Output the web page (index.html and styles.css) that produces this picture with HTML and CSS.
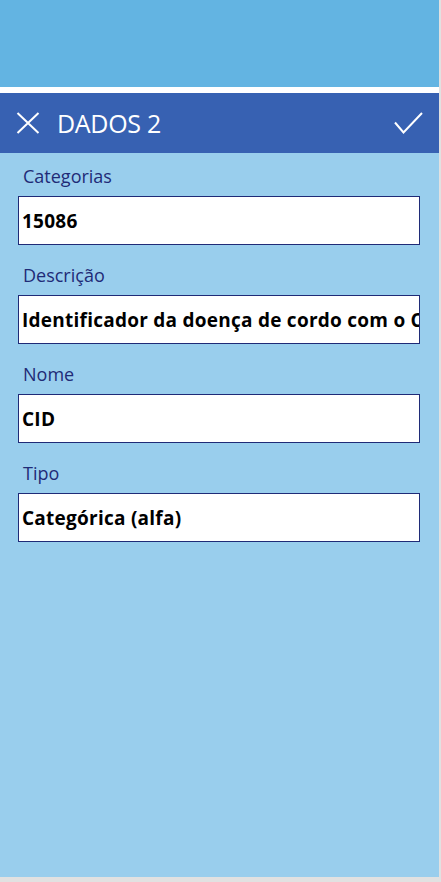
FILE: index.html
```html
<!DOCTYPE html>
<html lang="pt">
<head>
<meta charset="utf-8">
<link rel="stylesheet" href="styles.css">
</head>
<body>
<div class="app">
  <div class="top-band"></div>
  <div class="separator"></div>
  <header class="header">
    <svg class="icon icon-close" width="24" height="22" viewBox="0 0 24 22">
      <path d="M1.5 1 L22.5 21 M22.5 1 L1.5 21" stroke="#fff" stroke-width="2" fill="none"/>
    </svg>
    <h1 class="title">DADOS 2</h1>
    <svg class="icon icon-check" width="29" height="22" viewBox="0 0 29 22">
      <path d="M1 10.5 L9.5 20.5 L28 1" stroke="#fff" stroke-width="2" fill="none"/>
    </svg>
  </header>
  <main class="form">
    <div class="field">
      <label class="label">Categorias</label>
      <div class="input">15086</div>
    </div>
    <div class="field">
      <label class="label">Descrição</label>
      <div class="input">Identificador da doença de cordo com o CID</div>
    </div>
    <div class="field">
      <label class="label">Nome</label>
      <div class="input">CID</div>
    </div>
    <div class="field">
      <label class="label">Tipo</label>
      <div class="input">Categórica (alfa)</div>
    </div>
  </main>
</div>
</body>
</html>
```
FILE: styles.css
```css
html, body {
  margin: 0;
  padding: 0;
}
body {
  background: #e1e1e1;
  width: 441px;
  height: 882px;
  overflow: hidden;
  font-family: "Open Sans", "Noto Sans", sans-serif;
}
.app {
  width: 439px;
  height: 877px;
  background: #99ceed;
  display: flex;
  flex-direction: column;
}
.top-band {
  height: 87px;
  background: #63b4e2;
}
.separator {
  height: 6px;
  background: #ffffff;
}
.header {
  height: 60px;
  background: #3761b2;
  display: flex;
  align-items: center;
  padding: 0 16px 0 16px;
  box-sizing: border-box;
}
.icon {
  display: block;
  flex: none;
}
.title {
  margin: 0 0 0 17px;
  flex: 1;
  color: #ffffff;
  font-weight: 400;
  font-size: 25px;
  line-height: 34px;
  letter-spacing: -0.3px;
}
.form {
  display: flex;
  flex-direction: column;
  gap: 16px;
  padding: 9px 0 0 18px;
}
.field {
  display: flex;
  flex-direction: column;
  gap: 6px;
}
.label {
  display: block;
  height: 28px;
  line-height: 28px;
  padding-left: 5px;
  font-size: 18px;
  color: #1f2b77;
}
.input {
  box-sizing: border-box;
  width: 402px;
  height: 49px;
  border: 1px solid #1f2b77;
  background: #ffffff;
  padding: 0 3px;
  display: flex;
  align-items: center;
  white-space: nowrap;
  overflow: hidden;
  font-weight: 700;
  font-size: 19px;
  letter-spacing: 0.25px;
  color: #000000;
}
```
